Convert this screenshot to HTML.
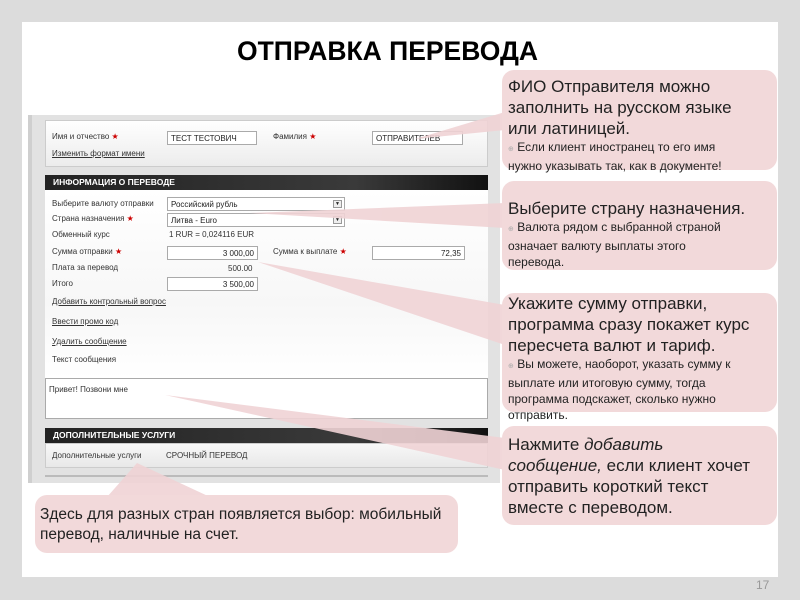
<!DOCTYPE html>
<html><head><meta charset="utf-8"><style>
*{margin:0;padding:0;box-sizing:border-box}
body{width:800px;height:600px;background:#dcdcdc;position:relative;overflow:hidden;font-family:"Liberation Sans","DejaVu Sans",sans-serif}
.slide{position:absolute;left:22px;top:22px;width:756px;height:555px;background:#fff}
.abs{position:absolute}
.title{left:237px;top:36px;font-size:26.5px;font-weight:bold;color:#000;white-space:nowrap}
.panel{left:28px;top:115px;width:472px;height:368px;background:#e2e2e2;border-left:4px solid #cfcfcf}
.sec{position:absolute;left:45px;width:443px}
.f{position:absolute;font-size:8px;color:#333;white-space:nowrap}
.u{text-decoration:underline}
.st{color:#c00}
.inp{position:absolute;background:#fff;border:1px solid #aaa;font-size:8px;color:#222;padding:1px 3px;height:14px;line-height:11px;white-space:nowrap;overflow:hidden}
.hdr{position:absolute;left:45px;width:443px;height:15px;background:linear-gradient(90deg,#222,#3a3a3a 70%,#111);color:#fff;font-size:8.5px;font-weight:bold;padding:3px 8px;line-height:9px}
.box{position:absolute;background:#f2d9da;border-radius:12px;color:#222;white-space:nowrap}
.big{font-size:17px;line-height:21px}
.sm{font-size:12px;line-height:16px}
.b{font-size:7px;color:#aaa}
.dd{position:absolute;right:2px;top:2px;width:9px;height:8px;border:1px solid #999;background:#eee;font-size:5px;text-align:center;line-height:7px}
</style></head><body>
<div class="slide"></div>
<div class="abs title">ОТПРАВКА ПЕРЕВОДА</div>

<div class="abs panel"></div>
<div class="sec" style="top:120px;height:47px;background:linear-gradient(#fff,#ececec);border:1px solid #ccc"></div>
<div class="f" style="left:52px;top:132px">Имя и отчество <span class="st">★</span></div>
<div class="inp" style="left:167px;top:131px;width:90px">ТЕСТ ТЕСТОВИЧ</div>
<div class="f" style="left:273px;top:132px">Фамилия <span class="st">★</span></div>
<div class="inp" style="left:372px;top:131px;width:91px">ОТПРАВИТЕЛЕВ</div>
<div class="f u" style="left:52px;top:149px">Изменить формат имени</div>

<div class="hdr" style="top:175px">ИНФОРМАЦИЯ О ПЕРЕВОДЕ</div>
<div class="sec" style="top:190px;height:188px;background:linear-gradient(#fff,#f7f7f7 60%,#fff)"></div>
<div class="f" style="left:52px;top:199px">Выберите валюту отправки</div>
<div class="inp" style="left:167px;top:197px;width:178px">Российский рубль<div class="dd">▼</div></div>
<div class="f" style="left:52px;top:214px">Страна назначения <span class="st">★</span></div>
<div class="inp" style="left:167px;top:213px;width:178px">Литва - Euro<div class="dd">▼</div></div>
<div class="f" style="left:52px;top:230px">Обменный курс</div>
<div class="f" style="left:169px;top:230px">1 RUR = 0,024116 EUR</div>
<div class="f" style="left:52px;top:247px">Сумма отправки <span class="st">★</span></div>
<div class="inp" style="left:167px;top:246px;width:91px;text-align:right">3 000,00</div>
<div class="f" style="left:273px;top:247px">Сумма к выплате <span class="st">★</span></div>
<div class="inp" style="left:372px;top:246px;width:93px;text-align:right">72,35</div>
<div class="f" style="left:52px;top:263px">Плата за перевод</div>
<div class="f" style="left:228px;top:264px">500.00</div>
<div class="f" style="left:52px;top:279px">Итого</div>
<div class="inp" style="left:167px;top:277px;width:91px;text-align:right">3 500,00</div>
<div class="f u" style="left:52px;top:297px">Добавить контрольный вопрос</div>
<div class="f u" style="left:52px;top:317px">Ввести промо код</div>
<div class="f u" style="left:52px;top:337px">Удалить сообщение</div>
<div class="f" style="left:52px;top:355px">Текст сообщения</div>
<div class="sec" style="top:378px;height:41px;background:#fff;border:1px solid #aaa"></div>
<div class="f" style="left:49px;top:385px">Привет! Позвони мне</div>

<div class="hdr" style="top:428px">ДОПОЛНИТЕЛЬНЫЕ УСЛУГИ</div>
<div class="sec" style="top:443px;height:25px;background:linear-gradient(#f8f8f8,#e8e8e8);border:1px solid #ccc"></div>
<div class="f" style="left:52px;top:451px">Дополнительные услуги</div>
<div class="f" style="left:166px;top:451px">СРОЧНЫЙ ПЕРЕВОД</div>
<div class="sec" style="top:475px;height:2px;background:#bbb"></div>

<svg class="abs" style="left:0;top:0" width="800" height="600">
<g fill="#f0d3d5" opacity="0.9">
<polygon points="505,112 505,130 415,139"/>
<polygon points="505,203 505,228 250,213"/>
<polygon points="505,305 505,345 258,262"/>
<polygon points="505,438 505,470 165,395"/>
<polygon points="107,497 210,497 137,463"/>
</g></svg>

<div class="box" style="left:502px;top:70px;width:275px;height:100px;padding:6px 6px">
<div class="big">ФИО Отправителя можно<br>заполнить на русском языке<br>или латиницей.</div>
<div class="sm"><span class="b">⊕</span> Если клиент иностранец то его имя<br>нужно указывать так, как в документе!</div></div>
<div class="box" style="left:502px;top:181px;width:275px;height:89px;padding:17px 6px 0">
<div class="big">Выберите страну назначения.</div>
<div class="sm"><span class="b">⊕</span> Валюта рядом с выбранной страной<br>означает валюту выплаты этого<br>перевода.</div></div>
<div class="box" style="left:502px;top:293px;width:275px;height:119px;padding:0 6px">
<div class="big">Укажите сумму отправки,<br>программа сразу покажет курс<br>пересчета валют и тариф.</div>
<div class="sm"><span class="b">⊕</span> Вы можете, наоборот, указать сумму к<br>выплате или итоговую сумму, тогда<br>программа подскажет, сколько нужно<br>отправить.</div></div>
<div class="box" style="left:502px;top:426px;width:275px;height:99px;padding:8px 6px">
<div class="big">Нажмите <i>добавить</i><br><i>сообщение,</i> если клиент хочет<br>отправить короткий текст<br>вместе с переводом.</div></div>
<div class="box" style="left:35px;top:495px;width:423px;height:58px;padding:10px 5px">
<div style="font-size:15.5px;line-height:20px">Здесь для разных стран появляется выбор: мобильный<br>перевод, наличные на счет.</div></div>
<div class="abs" style="left:756px;top:578px;font-size:12px;color:#999">17</div>
</body></html>
